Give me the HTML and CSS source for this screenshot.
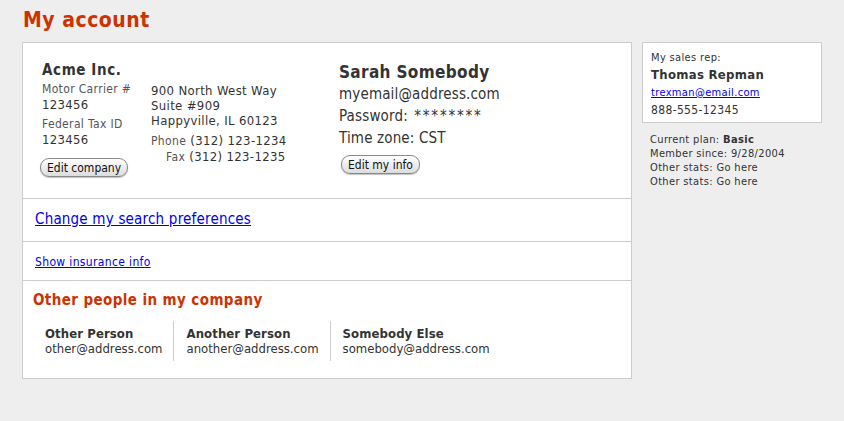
FILE: index.html
```html
<!DOCTYPE html>
<html lang="en">
<head>
  <meta charset="UTF-8" />
  <title>My account</title>
  <link rel="stylesheet" href="styles.css">
</head>
<body>
  <h1 class="page-title">My account</h1>
  <div class="layout">
    <div class="main">
      <div class="section top">
        <div class="company">
          <div class="company-name">Acme Inc.</div>
          <div class="field-label">Motor Carrier #</div>
          <div class="field-value">123456</div>
          <div class="field-label">Federal Tax ID</div>
          <div class="field-value">123456</div>
          <button class="btn">Edit company</button>
        </div>
        <div class="address">
          <div>900 North West Way</div>
          <div>Suite #909</div>
          <div>Happyville, IL 60123</div>
          <div class="phones">
            <div><span class="field-label">Phone</span> (312) 123-1234</div>
            <div class="fax"><span class="field-label">Fax</span> (312) 123-1235</div>
          </div>
        </div>
        <div class="me">
          <div class="me-name">Sarah Somebody</div>
          <div class="me-line">myemail@address.com</div>
          <div class="me-line">Password: <span class="stars">********</span></div>
          <div class="me-line">Time zone: CST</div>
          <button class="btn">Edit my info</button>
        </div>
      </div>
      <div class="section prefs">
        <a href="#" class="big-link">Change my search preferences</a>
      </div>
      <div class="section insurance">
        <a href="#" class="small-link">Show insurance info</a>
      </div>
      <div class="section others">
        <h2 class="section-title">Other people in my company</h2>
        <div class="people">
          <div class="person">
            <div class="person-name">Other Person</div>
            <div>other@address.com</div>
          </div>
          <div class="person">
            <div class="person-name">Another Person</div>
            <div>another@address.com</div>
          </div>
          <div class="person">
            <div class="person-name">Somebody Else</div>
            <div>somebody@address.com</div>
          </div>
        </div>
      </div>
    </div>

    <div class="sidebar">
      <div class="rep-box">
        <div class="rep-label">My sales rep:</div>
        <div class="rep-name">Thomas Repman</div>
        <a href="#" class="rep-email">trexman@email.com</a>
        <div class="rep-phone">888-555-12345</div>
      </div>
      <div class="stats">
        <div>Current plan: <b>Basic</b></div>
        <div>Member since: 9/28/2004</div>
        <div>Other stats: Go here</div>
        <div>Other stats: Go here</div>
      </div>
    </div>
  </div>
</body>
</html>
```

FILE: styles.css
```css
html, body {
  margin: 0;
  padding: 0;
  background-color: #eeeeee;
  font-family: 'DejaVu Sans Condensed', 'DejaVu Sans', Verdana, sans-serif;
  color: #333;
}
body {
  padding: 8px 0 0 22px;
}
.page-title {
  margin: 0 0 0 1px;
  font-size: 21px;
  line-height: 24px;
  letter-spacing: 0.5px;
  color: #cc3300;
  font-weight: bold;
}
.layout {
  display: flex;
  align-items: flex-start;
  gap: 10px;
  margin-top: 10px;
}
.main {
  width: 608px;
  background-color: #fff;
  border: 1px solid #cccccc;
}
.section {
  border-bottom: 1px solid #cccccc;
}
.section:last-child {
  border-bottom: none;
}
.top {
  display: flex;
  padding: 18px 10px 21px 19px;
}
.company {
  width: 109px;
}
.company-name {
  font-size: 15px;
  font-weight: bold;
  line-height: 18px;
  letter-spacing: 0.6px;
  margin-bottom: 3px;
}
.field-label {
  font-size: 12px;
  letter-spacing: 0.35px;
  color: #555;
}
.company .field-label {
  line-height: 15px;
}
.field-value {
  font-size: 13px;
  line-height: 16px;
  letter-spacing: 0.3px;
  margin-bottom: 4px;
}
.btn {
  font-family: 'DejaVu Sans Condensed', 'DejaVu Sans', Verdana, sans-serif;
  font-size: 12px;
  color: #111;
  background: linear-gradient(#ffffff, #dcdcdc);
  border: 1px solid #888;
  border-radius: 9px;
  padding: 0 6px;
  height: 19px;
  margin-top: 6px;
  margin-left: -2px;
  box-shadow: 0 1px 1px #00000040;
}
.address {
  width: 188px;
  font-size: 13px;
  line-height: 15px;
  letter-spacing: 0.35px;
  padding-top: 22px;
}
.phones {
  margin-top: 5px;
  line-height: 16px;
}
.fax {
  padding-left: 15px;
}
.me {
  font-size: 15px;
  letter-spacing: 0.15px;
}
.me-name {
  font-size: 17px;
  font-weight: bold;
  line-height: 22px;
  letter-spacing: 0.35px;
}
.me-line {
  line-height: 22px;
}
.stars {
  letter-spacing: 1.8px;
  margin-left: 2px;
}
.me .btn {
  margin-top: 6px;
  margin-left: 2px;
  letter-spacing: 0;
}
.prefs {
  padding: 10px 12px 10px;
  height: 22px;
}
.big-link {
  font-size: 15px;
  letter-spacing: 0.2px;
  color: #0000ee;
}
.insurance {
  padding: 9px 12px 13px;
  height: 16px;
}
.small-link {
  font-size: 12px;
  letter-spacing: 0.35px;
  color: #0000ee;
}
.others {
  padding: 10px 10px 17px;
}
.section-title {
  margin: 0;
  font-size: 15px;
  line-height: 18px;
  letter-spacing: 0.4px;
  color: #cc3300;
}
.people {
  display: flex;
  margin-top: 12px;
}
.person {
  font-size: 13px;
  line-height: 15px;
  padding: 5px 11px 5px 12px;
  border-left: 1px solid #cccccc;
}
.person:first-child {
  border-left: none;
}
.person-name {
  font-weight: bold;
  letter-spacing: 0.1px;
}
.sidebar {
  width: 180px;
}
.rep-box {
  background-color: #fff;
  border: 1px solid #cccccc;
  padding: 8px 8px 2px;
}
.rep-label {
  font-size: 11px;
  line-height: 14px;
  letter-spacing: 0.35px;
}
.rep-name {
  font-size: 13px;
  font-weight: bold;
  line-height: 20px;
  letter-spacing: 0.3px;
}
.rep-email {
  display: block;
  font-size: 11px;
  line-height: 15px;
  letter-spacing: 0.35px;
  color: #0000ee;
}
.rep-phone {
  font-size: 12px;
  line-height: 20px;
  letter-spacing: 0.35px;
}
.stats {
  font-size: 11px;
  line-height: 14px;
  letter-spacing: 0.35px;
  padding: 10px 0 0 8px;
}
```
